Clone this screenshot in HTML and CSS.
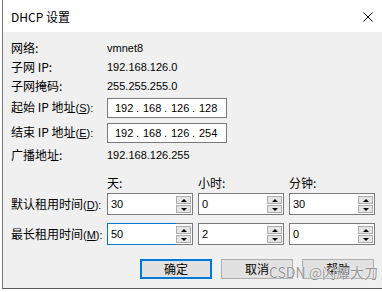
FILE: index.html
```html
<!DOCTYPE html>
<html lang="zh-CN">
<head>
    <meta charset="UTF-8">
    <meta name="viewport" content="width=device-width, initial-scale=1.0">
    <title>DHCP 设置</title>
    <link rel="stylesheet" href="styles.css">
</head>
<body>
    <div class="window">
        <div class="titlebar">
            <span class="title">DHCP 设置</span>
            <svg class="close" width="10" height="10" viewBox="0 0 10 10">
                <path d="M0.5 0.5 L9.5 9.5 M9.5 0.5 L0.5 9.5" stroke="#000" stroke-width="1" fill="none"/>
            </svg>
        </div>
        <div class="content">
            <div class="row info">
                <span class="label">网络:</span>
                <span class="value">vmnet8</span>
            </div>
            <div class="row info">
                <span class="label">子网 IP:</span>
                <span class="value">192.168.126.0</span>
            </div>
            <div class="row info">
                <span class="label">子网掩码:</span>
                <span class="value">255.255.255.0</span>
            </div>
            <div class="row field">
                <span class="label">起始 IP 地址<span class="key">(<u>S</u>):</span></span>
                <div class="ipbox">
                    <span class="octet">192</span><span class="dot">.</span>
                    <span class="octet">168</span><span class="dot">.</span>
                    <span class="octet">126</span><span class="dot">.</span>
                    <span class="octet">128</span>
                </div>
            </div>
            <div class="row field">
                <span class="label">结束 IP 地址<span class="key">(<u>E</u>):</span></span>
                <div class="ipbox">
                    <span class="octet">192</span><span class="dot">.</span>
                    <span class="octet">168</span><span class="dot">.</span>
                    <span class="octet">126</span><span class="dot">.</span>
                    <span class="octet">254</span>
                </div>
            </div>
            <div class="row info">
                <span class="label">广播地址:</span>
                <span class="value">192.168.126.255</span>
            </div>

            <div class="lease-row heads">
                <span></span>
                <span class="label">天:</span>
                <span class="label">小时:</span>
                <span class="label">分钟:</span>
            </div>
            <div class="lease-row">
                <span class="label">默认租用时间<span class="key">(<u>D</u>):</span></span>
                <div class="spin"><span class="edit">30</span><span class="updown"><i class="up"></i><i class="down"></i></span></div>
                <div class="spin"><span class="edit">0</span><span class="updown"><i class="up"></i><i class="down"></i></span></div>
                <div class="spin"><span class="edit">30</span><span class="updown"><i class="up"></i><i class="down"></i></span></div>
            </div>
            <div class="lease-row second">
                <span class="label">最长租用时间<span class="key">(<u>M</u>):</span></span>
                <div class="spin"><span class="edit focus">50</span><span class="updown"><i class="up"></i><i class="down"></i></span></div>
                <div class="spin"><span class="edit">2</span><span class="updown"><i class="up"></i><i class="down"></i></span></div>
                <div class="spin"><span class="edit">0</span><span class="updown"><i class="up"></i><i class="down"></i></span></div>
            </div>

            <div class="buttons">
                <button class="btn default">确定</button>
                <button class="btn">取消</button>
                <button class="btn">帮助</button>
            </div>
        </div>
        <div class="watermark">CSDN @闪耀大刀</div>
    </div>
</body>
</html>
```

FILE: styles.css
```css
/* Page */
body {
    margin: 0;
    background: #fff;
    font-family: "Noto Sans CJK SC", sans-serif;
    font-size: 12px;
    color: #000;
}

/* Dialog window */
.window {
    position: relative;
    margin-left: 2px;
    width: 380px;
    height: 289px;
    box-sizing: border-box;
    background: #f0f0f0;
    border-left: 1px solid #7a7a7a;
    border-bottom: 1px solid #5a5a5a;
    overflow: hidden;
}

.titlebar {
    height: 32px;
    background: #fff;
    display: flex;
    align-items: center;
    justify-content: space-between;
    padding: 1px 9px 0 8px;
    box-sizing: border-box;
}

.title {
    font-size: 12px;
    line-height: 16px;
}

/* Content */
.content {
    padding: 6px 0 0 8px;
}

.label {
    white-space: nowrap;
}

.key {
    font-family: "Liberation Sans", sans-serif;
    font-size: 11px;
}

.row {
    display: grid;
    grid-template-columns: 91px auto;
    column-gap: 5px;
    align-items: center;
    line-height: 16px;
}

.row.info {
    height: 19px;
}

.row.field {
    height: 25px;
}

.value,
.ipbox,
.edit {
    font-family: "Liberation Sans", sans-serif;
    font-size: 11px;
}

.ipbox {
    width: 120px;
    height: 20px;
    box-sizing: border-box;
    background: #fff;
    border: 1px solid #7a7a7a;
    display: flex;
    align-items: center;
    padding-left: 7px;
}

.octet {
    width: 21px;
}

.dot {
    width: 7px;
}

/* Lease times */
.lease-row {
    display: grid;
    grid-template-columns: 91px 86px 86px 86px;
    column-gap: 5px;
    align-items: center;
    height: 22px;
    line-height: 16px;
}

.lease-row.heads {
    height: 20px;
    margin-top: 9px;
}

.lease-row.second {
    margin-top: 8px;
}

.spin {
    display: flex;
    height: 22px;
}

.edit {
    flex: 1;
    display: flex;
    align-items: center;
    padding-left: 3px;
    background: #fff;
    border: 1px solid #7a7a7a;
    border-right: none;
}

.edit.focus {
    border-color: #0078d7;
}

.updown {
    width: 17px;
    box-sizing: border-box;
    background: #fff;
    border: 1px solid #7a7a7a;
    border-left: none;
    padding: 2px 1px 0 0;
    display: flex;
    flex-direction: column;
    gap: 1px;
}

.updown i {
    height: 8px;
    box-sizing: border-box;
    background: #e5e5e5;
    border: 1px solid #adadad;
    display: flex;
    align-items: center;
    justify-content: center;
}

.updown i::after {
    content: "";
    border-left: 3px solid transparent;
    border-right: 3px solid transparent;
}

.updown .up::after {
    border-bottom: 3px solid #000;
}

.updown .down::after {
    border-top: 3px solid #000;
}

/* Buttons */
.buttons {
    display: flex;
    justify-content: flex-end;
    gap: 9px;
    margin-top: 14px;
    padding-right: 8px;
}

.btn {
    width: 72px;
    height: 20px;
    padding: 0;
    box-sizing: border-box;
    background: #e1e1e1;
    border: 1px solid #adadad;
    font-family: "Noto Sans CJK SC", sans-serif;
    font-size: 12px;
    line-height: 16px;
    color: #000;
}

.btn.default {
    border: 2px solid #0078d7;
}

.watermark {
    position: absolute;
    right: 4px;
    bottom: 6px;
    font-size: 14px;
    color: rgba(110, 110, 110, 0.75);
    text-shadow: 0 0 1px #fff, 0 0 1px #fff;
}
```
